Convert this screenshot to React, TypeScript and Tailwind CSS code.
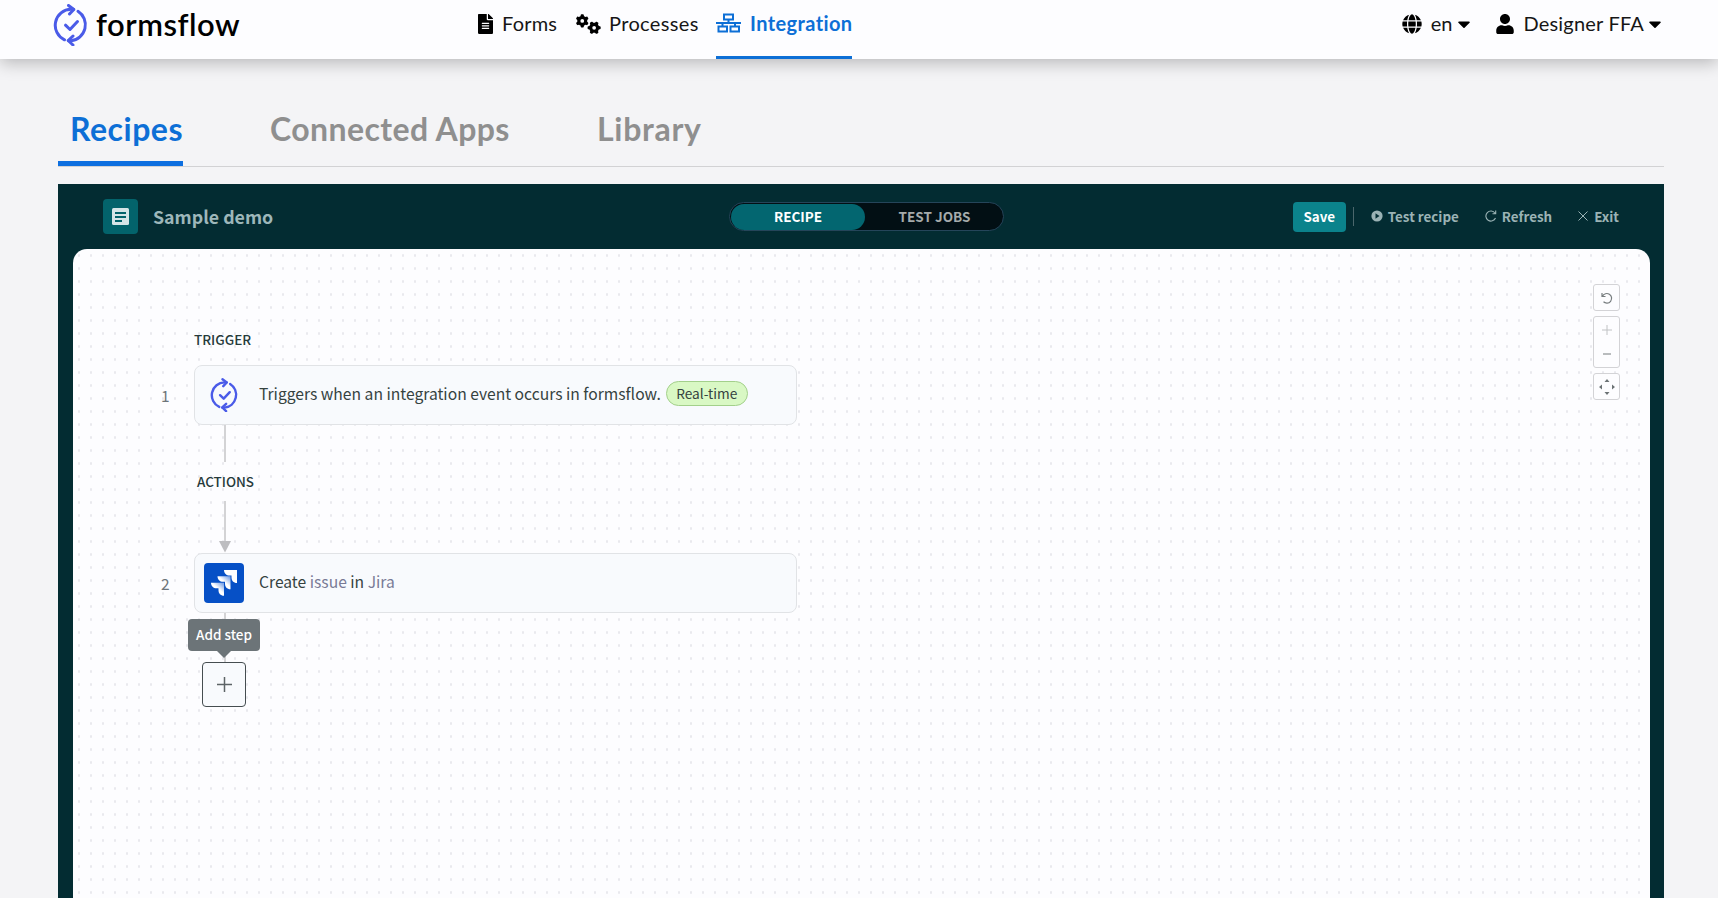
import React from "react";
import { FaFileAlt, FaGlobe, FaUser, FaCaretDown } from "react-icons/fa";
import { FaGears } from "react-icons/fa6";

const SANS = "font-['Noto_Sans_CJK_SC','Open_Sans',sans-serif]";

function FlowLogo({ className }: { className: string }) {
  return (
    <svg viewBox="0 0 36 42" className={className} fill="none" stroke="#4a5be8" strokeWidth="3" strokeLinecap="round" strokeLinejoin="round">
      <path d="M11.500 35.800A16 16 0 0 1 18 5.300H20.500" />
      <path d="M25 7.300A16 16 0 0 1 18 36.700H15.500" />
      <path d="M15.500 1.500L20.800 5.500L16.500 10" />
      <path d="M20 32L15.200 36.500L20 41" />
      <path d="M12.500 21.200L17 25.500L24.500 17.500" />
    </svg>
  );
}

function SitemapIcon() {
  return (
    <svg viewBox="0 0 25 20" className="h-5 w-[25px] shrink-0" fill="none" stroke="#0d6fd6" strokeWidth="2">
      <path d="M8 1.500h9v5H8zM2.500 13.500h8.500v5H2.500zM14.500 13.500H23v5h-8.500zM12.500 6.500v3.500M0 10h25M6.500 10v3.500M19 10v3.500" />
    </svg>
  );
}

function TopBar() {
  return (
    <header className="relative z-10 flex h-[59px] shrink-0 items-start bg-[#fdfdff] font-['Lato',sans-serif] text-[20px] leading-[46px] text-[#161616] shadow-[0_4px_16px_rgba(0,0,0,0.25)]">
      <div className="flex h-[49px] w-[424px] shrink-0 items-center pl-[53px]">
        <FlowLogo className="h-[42px] w-9" />
        <span className="pb-[2px] pl-[7px] text-[31px] font-semibold tracking-[0.5px] text-black">formsflow</span>
      </div>
      <nav className="flex h-full pl-[54px]">
        <a className="flex h-12 w-[98px] items-center">
          <FaFileAlt className="h-5 w-[15px] text-black" />
          <span className="pb-[2px] pl-[9px] tracking-[0.2px]">Forms</span>
        </a>
        <a className="flex h-12 w-[140px] items-center">
          <FaGears className="h-5 w-[25px] text-black" />
          <span className="pb-[2px] pl-2 tracking-[0.35px]">Processes</span>
        </a>
        <a className="flex h-full w-[136px] items-start border-b-[3px] border-[#0d6fd6] font-bold text-[#0d6fd6]">
          <span className="flex h-[46px] items-center">
            <SitemapIcon />
            <span className="pb-px pl-[9px] tracking-[0.4px]">Integration</span>
          </span>
        </a>
      </nav>
      <div className="ml-auto flex h-[47px] items-center pr-[55px]">
        <FaGlobe className="h-5 w-5 text-black" />
        <span className="pb-px pl-[9px]">en</span>
        <FaCaretDown className="ml-1 h-5 w-4 text-black" />
        <FaUser className="ml-[24px] h-5 w-[18px] text-black" />
        <span className="pb-px pl-[9px] tracking-[0.2px]">Designer FFA</span>
        <FaCaretDown className="ml-[3px] h-5 w-4 text-black" />
      </div>
    </header>
  );
}

function Tabs() {
  return (
    <div className="ml-[58px] mr-[54px] mt-[43px] flex h-[65px] shrink-0 border-b border-[#d2d2d4] font-['Lato',sans-serif] text-[32px] font-bold leading-[54px] tracking-[0.4px] text-[#8f8f8f]">
      <div className="-mb-px h-[64px] w-[125px] border-b-[5px] border-[#0d6fe0] pl-[12px] tracking-[0.5px] text-[#0d6fd6]">Recipes</div>
      <div className="w-[327px] whitespace-nowrap pl-[87px]">Connected Apps</div>
      <div className="pl-[87px] tracking-[0.7px]">Library</div>
    </div>
  );
}

function Toolbar() {
  return (
    <div className="flex h-[65px] shrink-0 items-center pl-[45px] pr-[45px]">
      <div className="flex w-[626px] items-center">
        <div className="flex h-[35px] w-[35px] items-center justify-center rounded bg-[#03636b]">
          <svg viewBox="0 0 17 17" className="h-[17px] w-[17px]">
            <rect width="17" height="17" rx="1.500" fill="#d5e5e7" />
            <path d="M3 5h11M3 9h11M3 13h7" stroke="#03636b" strokeWidth="1.800" />
          </svg>
        </div>
        <span className="pb-px pl-[15px] text-[17.800px] font-bold text-[#9db7ba]">Sample demo</span>
      </div>
      <div className="flex h-[29px] w-[275px] items-center rounded-full border border-[#25455a] bg-[#020f14] p-px text-center text-[13.500px] font-bold">
        <div className="flex h-[26px] w-[134px] items-center justify-center rounded-full bg-[#036670] text-white">RECIPE</div>
        <div className="flex-1 pl-0.5 text-[#a5abab]">TEST JOBS</div>
      </div>
      <div className="ml-auto flex items-center text-[13.400px] font-bold text-[#9bb3b5]">
        <button className="h-[30px] w-[53px] rounded bg-[#0b838c] text-white">Save</button>
        <span className="ml-[7px] h-[19px] w-px bg-[#4b676c]" />
        <span className="ml-[17px] flex items-center gap-[5px]">
          <svg viewBox="0 0 12 12" className="h-3 w-3"><circle cx="6" cy="6" r="5.600" fill="#9bb3b5" /><path d="M4.500 3.300l4 2.700l-4 2.700z" fill="#052f35" /></svg>
          Test recipe
        </span>
        <span className="ml-[26px] flex items-center gap-[5px]">
          <svg viewBox="0 0 12 12" className="h-3 w-3" fill="none" stroke="#9bb3b5" strokeWidth="1.100"><path d="M10.500 8A5 5 0 1 1 10 3.200M10.700 0.500v3.200H7.500" /></svg>
          Refresh
        </span>
        <span className="ml-[26px] flex items-center gap-[6px]">
          <svg viewBox="0 0 10 10" className="h-2.5 w-2.5" fill="none" stroke="#9bb3b5"><path d="M0.500 0.500l9 9M9.500 0.500l-9 9" /></svg>
          Exit
        </span>
      </div>
    </div>
  );
}

function JiraIcon() {
  return (
    <div className="h-10 w-10 rounded bg-[#0650c6]">
      <svg viewBox="0 0 40 40" className="h-10 w-10">
        <defs>
          <linearGradient id="jira" x1="1" y1="0" x2="0.300" y2="0.800">
            <stop offset="0.100" stopColor="#7ea6e8" />
            <stop offset="0.600" stopColor="#ffffff" />
          </linearGradient>
        </defs>
        <path d="M20 7h13v13c-3.500 0-5.500-2.500-5.500-5.500v-2H25.500c-3 0-5.500-2-5.500-5.500z" fill="#fff" />
        <path d="M13.500 13.300h13v13c-3.500 0-5.500-2.500-5.500-5.500v-2H19c-3 0-5.500-2-5.500-5.500z" fill="url(#jira)" />
        <path d="M7 19.800h13v13c-3.500 0-5.500-2.500-5.500-5.500v-2H12.500c-3 0-5.500-2-5.500-5.500z" fill="url(#jira)" />
      </svg>
    </div>
  );
}

function Step({ index, icon, children }: { index: number; icon: React.ReactNode; children: React.ReactNode }) {
  return (
    <div className="flex h-[60px] shrink-0 items-center">
      <span className="w-[34px] pl-px pt-[2px] text-[15.500px] text-[#6d757a]">{index}</span>
      <div className="flex h-[60px] w-[603px] items-center rounded-lg border border-[#e1e3e6] bg-[#f8fafd] text-[15.650px] text-[#35423f]">
        <div className="flex w-[64px] items-center pl-[9px]">{icon}</div>
        {children}
      </div>
    </div>
  );
}

function Canvas() {
  return (
    <div className="relative ml-[15px] mr-[14px] flex min-h-0 flex-1 flex-col overflow-hidden rounded-t-[14px] bg-[#fdfdff] bg-[radial-gradient(circle,#e9e9ee_1px,transparent_1.500px)] bg-[size:12px_13px] pl-[87px]">
      <div className="flex h-[116px] shrink-0 items-end pb-[16px] pl-[34px] text-[13.500px] font-medium leading-5 text-[#263a3b]">TRIGGER</div>
      <Step index={1} icon={<FlowLogo className="ml-[6px] h-[34px] w-[29px]" />}>
        <span className="pb-[2px]">Triggers when an integration event occurs in formsflow.</span>
        <span className="mb-[3px] ml-[5px] flex h-[25px] w-[82px] items-center justify-center rounded-full border border-[#a3d08b] bg-[#d9f8c4] text-[13.700px]">Real-time</span>
      </Step>
      <div className="ml-[64px] h-[37px] w-0.5 shrink-0 bg-[#d3d3d5]" />
      <div className="flex h-[39px] shrink-0 items-center pl-[37px] text-[13.400px] font-medium text-[#263a3b]">ACTIONS</div>
      <svg viewBox="0 0 12 52" className="ml-[59px] h-[52px] w-3 shrink-0">
        <path d="M6 0v42" stroke="#d3d3d5" strokeWidth="2" />
        <path d="M0 40h12L6 51.500z" fill="#bdbdc0" />
      </svg>
      <Step index={2} icon={<JiraIcon />}>
        <span className="pb-[3px]">Create <span className="text-[#787a96]">issue</span> in <span className="text-[#787a96]">Jira</span></span>
      </Step>
      <div className="flex w-[128px] flex-col items-center">
        <div className="ml-[2px] h-[6px] w-0.5 bg-[#d3d3d5]" />
        <div className="h-8 w-[72px] rounded bg-[#6c7478] text-center text-[13.500px] font-medium leading-[31px] text-white">Add step</div>
        <svg viewBox="0 0 14 11" className="h-[11px] w-3.5"><path d="M8 0v11" stroke="#d3d3d5" strokeWidth="2" /><path d="M0 0h14L7 7z" fill="#6c7478" /></svg>
        <div className="flex h-[45px] w-11 items-center justify-center rounded border border-[#454d50] bg-[#f8fafd]">
          <svg viewBox="0 0 15 15" className="h-[15px] w-[15px]" stroke="#5c6366" strokeWidth="1.500"><path d="M7.500 0v15M0 7.500h15" /></svg>
        </div>
      </div>
      <ZoomControls />
    </div>
  );
}

function ZoomControls() {
  return (
    <div className="absolute right-[30px] top-[35px] flex w-[27px] flex-col gap-[5px]">
      <div className="flex h-[27px] items-center justify-center rounded-[3px] border border-[#d3d3d6] bg-[#fdfdff]">
        <svg viewBox="0 0 12 12" className="h-3 w-3" fill="none" stroke="#777d7f" strokeWidth="1.200"><path d="M1 1v3.500h3.500M1.500 4.200A4.800 4.800 0 1 1 2.500 9.800" /></svg>
      </div>
      <div className="flex h-[52px] flex-col items-center justify-between rounded-[3px] border border-[#d3d3d6] bg-[#fdfdff] py-2">
        <svg viewBox="0 0 10 10" className="h-2.5 w-2.5" stroke="#c0c2c4"><path d="M5 0v10M0 5h10" /></svg>
        <svg viewBox="0 0 10 10" className="h-2.5 w-2.5" stroke="#777d7f" strokeWidth="1.200"><path d="M1 5h8" /></svg>
      </div>
      <div className="flex h-[27px] items-center justify-center rounded-[3px] border border-[#d3d3d6] bg-[#fdfdff]">
        <svg viewBox="0 0 16 16" className="h-4 w-4" fill="#6c7375"><path d="M8 0l2.500 3h-5zM8 16l2.500-3h-5zM0 8l3-2.500v5zM16 8l-3-2.500v5z" /></svg>
      </div>
    </div>
  );
}

export default function App() {
  return (
    <div className="flex h-[898px] w-full flex-col overflow-hidden bg-[#f4f4f6]">
      <TopBar />
      <Tabs />
      <main className={"ml-[58px] mr-[54px] mt-[17px] flex min-h-0 flex-1 flex-col bg-[#032c32] " + SANS}>
        <Toolbar />
        <Canvas />
      </main>
    </div>
  );
}
